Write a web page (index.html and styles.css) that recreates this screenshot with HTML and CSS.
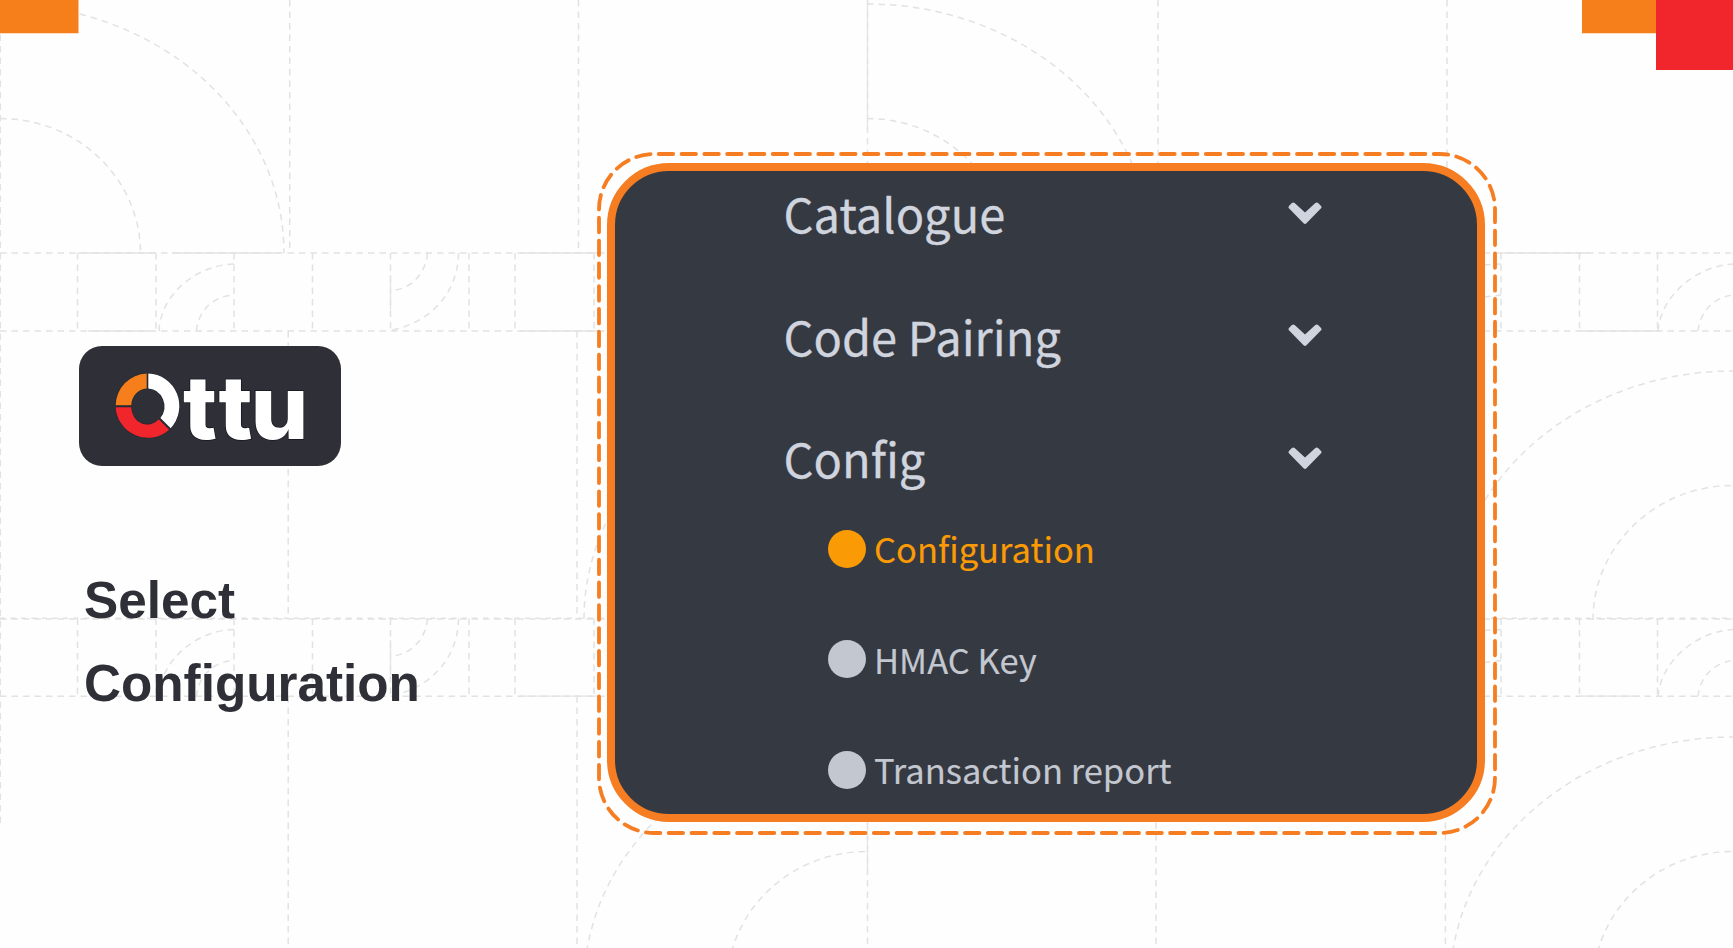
FILE: index.html
```html
<!DOCTYPE html>
<html lang="en">
<head>
<meta charset="utf-8">
<title>Ottu - Select Configuration</title>
<link rel="stylesheet" href="styles.css">
</head>
<body>
<main class="slide">
  <svg class="backdrop" viewBox="0 0 1733 948" aria-hidden="true">
    <defs>
      <g id="band">
        <path d="M77.5 0V78M156 0V78M234 0V78M312.500 0V78M390.500 0V78M469 0V78M515 0V78M594 0V78M1501 0V78M1579.500 0V78M1657.500 0V78"/>
        <path d="M159 78C160 44 194 12 234 11M196.500 78C198 58 213 43 234 42"/>
        <path d="M427.500 0C426 20 411 37 390.500 37.500M458.500 0C458 42 428 70 392 77"/>
        <path d="M1658 78C1661 42 1697 12 1735 11M1698 78C1700 58 1715 43 1735 42M1484 12L1501 11M1484 44L1501 42"/>
      </g>
      <path id="arch-left" d="M-283 0A283 249 0 0 1 0 -249M-140 0A140 134.500 0 0 1 0 -134.500"/>
      <path id="arch-right" d="M0 -249A284 249 0 0 1 284 0M0 -134.500A140.500 134.500 0 0 1 140.500 0"/>
    </defs>
    <g class="guides">
      <path d="M.3 0V826M289.700 0V253M578.500 0V253M867.500 0V253M1158 0V253M1447 0V253"/>
      <path d="M288.200 331V619M577 331V619M288.200 696V948M577 696V948M867.500 696V948M1156 696V948M1445.400 696V948"/>
      <path d="M0 253H1733M0 331H1733M0 619H1733M0 696.200H1733"/>
      <path class="wave" d="M0 618.300H1733"/>
      <use href="#band" y="253"/>
      <use href="#band" y="618.500"/>
      <use href="#arch-right" x="0" y="253"/>
      <use href="#arch-right" x="867" y="253"/>
      <use href="#arch-left" x="867" y="619"/>
      <use href="#arch-left" x="1733" y="620"/>
      <use href="#arch-left" x="867" y="986"/>
      <use href="#arch-left" x="1733" y="986"/>
    </g>
    <path class="solid" d="M78 253H155M172 253H280M520 253H600M88 331H150M520 331H600M1500 253H1590M1580 331H1660M520 696.200H600M1580 696.200H1640M867.500 0V130M867.500 820V875M390.500 275V310M390.500 640V675"/>
    <path class="orange" d="M0 0H78.500V33.300H0ZM1582 0H1656V33.300H1582Z"/>
    <path class="red" d="M1656 0H1733V70H1656Z"/>
  </svg>

  <section class="intro">
    <div class="logo">
      <svg viewBox="0 0 262 120" role="img" aria-label="Ottu">
        <g class="ring">
          <path class="ring-orange" d="M36.600 59.200A32 32.500 0 0 1 67.700 27.500V42.500A16 17.500 0 0 0 52.300 59.200Z"/>
          <path class="ring-white" d="M69.300 27.500A32 32.500 0 0 1 91.700 82.200L81.400 72.100A17 18 0 0 0 69.300 42.500Z"/>
          <path class="ring-red" d="M36.600 61.200H52.300A16 17.500 0 0 0 79.800 73.200L90.200 83.700A32.300 32.500 0 0 1 36.600 61.200Z"/>
        </g>
        <g class="wordmark">
          <text x="104" y="92.500" textLength="34" lengthAdjust="spacingAndGlyphs">t</text>
          <text x="139.500" y="92.500" textLength="34" lengthAdjust="spacingAndGlyphs">t</text>
          <text x="171.500" y="92.500" textLength="58" lengthAdjust="spacingAndGlyphs">u</text>
        </g>
      </svg>
    </div>
    <h1 class="title">Select<br>Configuration</h1>
  </section>

  <section class="panel">
    <svg class="dash-frame" viewBox="0 0 902 685" aria-hidden="true">
      <path pathLength="3050" d="M3 58.300A55.300 55.300 0 0 1 58.300 3H843.700A55.300 55.300 0 0 1 899 58.300V626.700A55.300 55.300 0 0 1 843.700 682H58.300A55.300 55.300 0 0 1 3 626.700Z"/>
    </svg>
    <ul class="menu">
      <li class="item"><span>Catalogue</span><svg class="chevron" viewBox="0 0 34 24"><path d="M2.600 5.200 5.300 2.500 17 13.200 28.700 2.500 31.400 5.200 17 19.900Z"/></svg></li>
      <li class="item"><span>Code Pairing</span><svg class="chevron" viewBox="0 0 34 24"><path d="M2.600 5.200 5.300 2.500 17 13.200 28.700 2.500 31.400 5.200 17 19.900Z"/></svg></li>
      <li class="item"><span>Config</span><svg class="chevron" viewBox="0 0 34 24"><path d="M2.600 5.200 5.300 2.500 17 13.200 28.700 2.500 31.400 5.200 17 19.900Z"/></svg></li>
    </ul>
    <ul class="submenu">
      <li class="sub active"><i class="dot"></i><span>Configuration</span></li>
      <li class="sub"><i class="dot"></i><span>HMAC Key</span></li>
      <li class="sub"><i class="dot"></i><span>Transaction report</span></li>
    </ul>
  </section>
</main>
</body>
</html>
```
FILE: styles.css
```css
* { box-sizing: border-box; }
body { margin: 0; background: #fefefe; }
.slide {
  position: relative;
  display: flex;
  align-items: flex-start;
  width: 1733px;
  height: 948px;
  overflow: hidden;
}
.backdrop { position: absolute; inset: 0; width: 1733px; height: 948px; }
.guides { fill: none; stroke: #e2e2e2; stroke-width: 1.5; stroke-dasharray: 6.5 5; }
.wave { stroke-dasharray: 5 5.500; }
.solid { fill: none; stroke: #e4e4e4; stroke-width: 1.3; }
.orange { fill: #f77f1b; }
.red { fill: #f0262c; }

.intro { position: relative; flex: none; width: 607px; padding: 346px 0 0 79px; }
.logo { width: 262px; height: 120px; border-radius: 23px; background: #2f2f37; }
.logo svg { display: block; width: 262px; height: 120px; }
.ring { stroke: #14232e; stroke-width: 1; paint-order: stroke; }
.ring-orange { fill: #f77f1b; }
.ring-white { fill: #fff; }
.ring-red { fill: #f0262c; }
.wordmark {
  font: 800 88px Inter, sans-serif;
  fill: #fff;
  stroke: #15151f;
  stroke-width: 1.500px;
  paint-order: stroke;
}
.title {
  margin: 94px 0 0 5px;
  font: bold 51.250px/82.600px "Liberation Sans", Arial, sans-serif;
  color: #2f2f37;
}

.panel {
  position: relative;
  flex: none;
  width: 878px;
  height: 659px;
  margin-top: 163px;
  padding: 12px 155px 0 171px;
  border: 8px solid #f67d21;
  border-radius: 62px;
  background: #353941;
  font-family: "Noto Sans CJK SC", "Noto Sans", sans-serif;
}
.dash-frame { position: absolute; left: -19px; top: -20px; width: 902px; height: 685px; }
.dash-frame path {
  fill: none;
  stroke: #f67d21;
  stroke-width: 3.800;
  stroke-linecap: round;
  stroke-dasharray: 14.460 8.300;
}
.menu, .submenu { margin: 0; padding: 0; list-style: none; }
.menu { display: grid; gap: 62.600px; }
.item {
  display: flex;
  align-items: center;
  justify-content: space-between;
  height: 60px;
  font-size: 47px;
  line-height: 60px;
  color: #d0d4de;
  -webkit-text-stroke: .3px #d0d4de;
}
.item span { margin-left: -2.500px; white-space: nowrap; }
.chevron { width: 34px; height: 24px; margin-top: 1px; }
.chevron path { fill: #d0d4de; stroke: #d0d4de; stroke-width: 4; stroke-linejoin: round; }
.submenu { display: grid; gap: 62.600px; margin: 36px 0 0 42px; }
.sub {
  display: flex;
  align-items: center;
  gap: 8px;
  height: 48px;
  font-size: 34.500px;
  line-height: 48px;
  color: #c3c7d0;
  white-space: nowrap;
  -webkit-text-stroke: .15px currentColor;
}
.dot { width: 38px; height: 38px; margin-top: 1px; border-radius: 50%; background: #c3c7d0; }
.active { color: #fa9b05; }
.active .dot { background: #fa9b05; }
```
